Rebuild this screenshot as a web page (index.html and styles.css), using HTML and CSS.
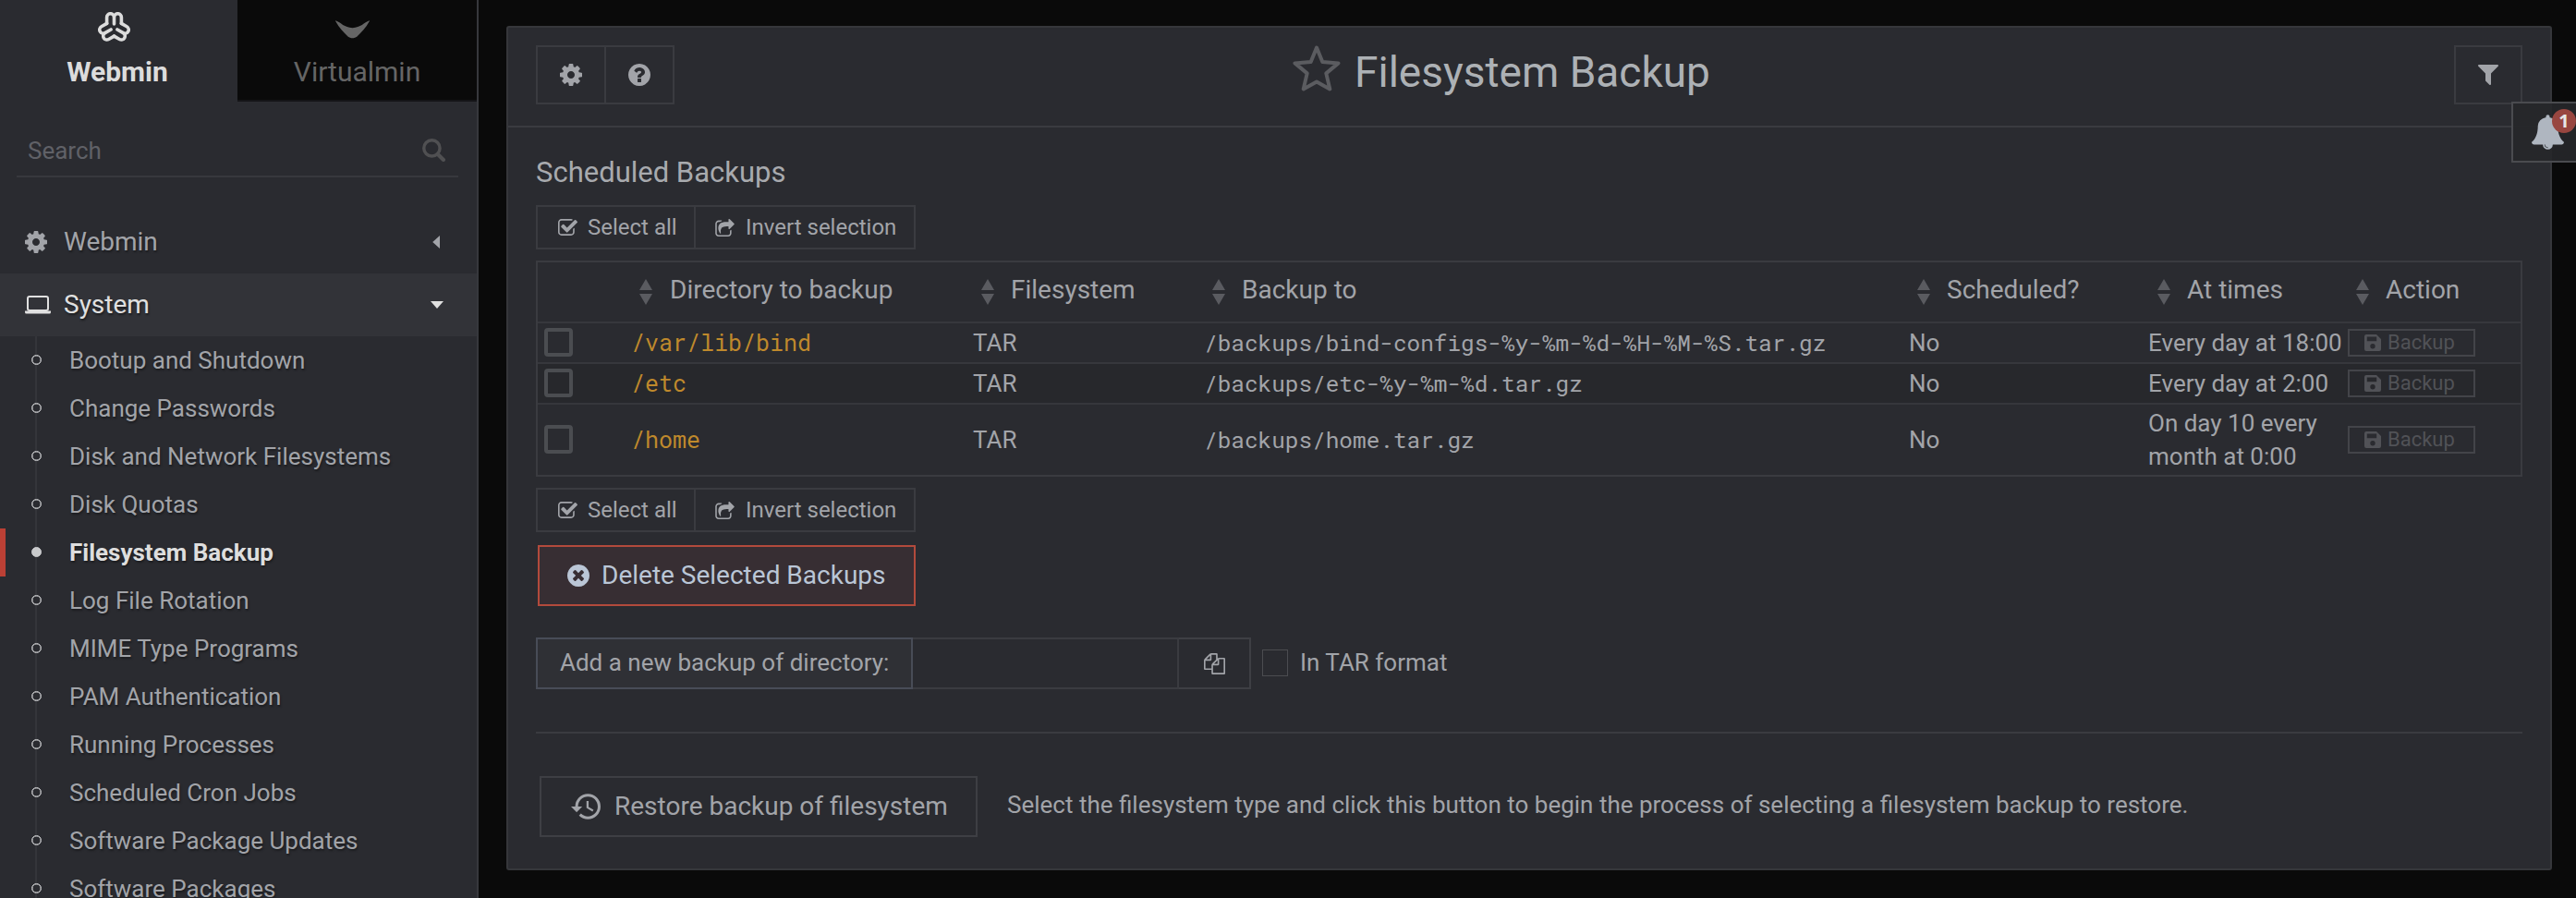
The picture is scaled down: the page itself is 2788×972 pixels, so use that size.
FILE: index.html
```
<!DOCTYPE html>
<html lang="en">
<head>
<meta charset="utf-8">
<title>Filesystem Backup</title>
<link rel="stylesheet" href="styles.css">
</head>
<body>
<svg class="defs" aria-hidden="true">
  <symbol id="cog" viewBox="128 128 1536 1536"><path d="M1152 896q0-106-75-181t-181-75-181 75-75 181 75 181 181 75 181-75 75-181zm512-109v222q0 12-8 23t-20 13l-185 28q-19 54-39 91 35 50 107 138 10 12 10 25t-9 23q-27 37-99 108t-94 71q-12 0-26-9l-138-108q-44 23-91 38-16 136-29 186-7 28-36 28h-222q-14 0-24.5-8.5t-11.5-21.5l-28-184q-49-16-90-37l-141 107q-10 9-25 9-14 0-25-11-126-114-165-168-7-10-7-23 0-12 8-23 15-21 51-66.5t54-70.5q-27-50-41-99l-183-27q-13-2-21-12.5t-8-23.5v-222q0-12 8-23t19-13l186-28q14-46 39-92-40-57-107-138-10-12-10-24 0-10 9-23 26-36 98.5-107.5t94.5-71.5q13 0 26 10l138 107q44-23 91-38 16-136 29-186 7-28 36-28h222q14 0 24.5 8.5t11.5 21.5l28 184q49 16 90 37l142-107q9-9 24-9 13 0 25 10 129 119 165 170 7 8 7 22 0 12-8 23-15 21-51 66.5t-54 70.5q26 50 41 98l183 28q13 2 21 12.5t8 23.5z"/></symbol>
  <symbol id="check" viewBox="64 128 1664 1408"><path d="M1472 930v318q0 119-84.5 203.5t-203.5 84.5h-832q-119 0-203.5-84.5t-84.5-203.5v-832q0-119 84.5-203.5t203.5-84.5h832q63 0 117 25 15 7 18 23 3 17-9 29l-49 49q-10 10-23 10-3 0-9-2-23-6-45-6h-832q-66 0-113 47t-47 113v832q0 66 47 113t113 47h832q66 0 113-47t47-113v-254q0-13 9-22l64-64q10-10 23-10 6 0 12 3 20 8 20 29zm231-489l-814 814q-24 24-57 24t-57-24l-430-430q-24-24-24-57t24-57l110-110q24-24 57-24t57 24l263 263 647-647q24-24 57-24t57 24l110 110q24 24 24 57t-24 57z"/></symbol>
  <symbol id="share" viewBox="64 0 1664 1536"><path d="M1472 989v259q0 119-84.5 203.5t-203.5 84.5h-832q-119 0-203.5-84.5t-84.5-203.5v-832q0-119 84.5-203.5t203.5-84.5h255q13 0 22.5 9.5t9.5 22.5q0 27-26 32-77 26-133 60-10 4-16 4h-112q-66 0-113 47t-47 113v832q0 66 47 113t113 47h832q66 0 113-47t47-113v-214q0-19 18-29 28-13 54-37 16-16 35-8 21 9 21 29zm237-496l-384 384q-18 19-45 19-12 0-25-5-39-17-39-59v-192h-160q-323 0-438 131-119 137-74 473 3 23-20 34-8 2-12 2-16 0-26-13-10-14-21-31t-39.5-68.5-49.5-99.5-38.5-114-17.5-122q0-49 3.5-91t14-90 28-88 47-81.5 68.5-74 94.5-61.5 124.5-48.5 159.5-30.5 196.5-11h160v-192q0-42 39-59 13-5 25-5 26 0 45 19l384 384q19 19 19 45t-19 45z"/></symbol>
  <symbol id="save" viewBox="0 0 18 18"><path fill-rule="evenodd" d="M2 0h11l5 5v11a2 2 0 0 1-2 2H2a2 2 0 0 1-2-2V2a2 2 0 0 1 2-2zm.8 2.6v4.6h10.4V2.6zM9 10a2.7 2.7 0 1 0 0 5.4 2.7 2.7 0 0 0 0-5.4z"/></symbol>
  <symbol id="sort" viewBox="0 0 14 28"><path d="M7 0l7 12H0zM0 16h14L7 28z"/></symbol>
</svg>

<div class="app">
  <aside class="sidebar">
    <div class="tabs">
      <div class="tab active">
        <svg class="tab-icon" viewBox="-17.5 -17 35 32"><g fill="none" stroke="currentColor" stroke-width="3.6" stroke-linecap="round" stroke-linejoin="round"><path id="lobe" d="M-7.9-4.5v-6.8a3.95 3.95 0 0 1 7.9 0v7.3v-7.3a3.95 3.95 0 0 1 7.9 0v6.8"/><use href="#lobe" transform="rotate(120)"/><use href="#lobe" transform="rotate(240)"/></g></svg>
        <span>Webmin</span>
      </div>
      <div class="tab">
        <svg class="tab-icon" viewBox="0 0 37 32"><path fill="currentColor" d="M.3 9.3C6 11.500 9.500 16.800 18.500 17.200 27.500 16.800 31 11.500 36.700 9.300c.3 0 .3.400.1.800C33 17 28 22.500 23.500 26.500c-3 2.400-7 2.400-10 0C9 22.500 4 17 .2 10.100 0 9.700 0 9.300.3 9.300z"/></svg>
        <span>Virtualmin</span>
      </div>
    </div>
    <div class="search">
      <span>Search</span>
      <svg viewBox="0 0 24 24"><circle cx="10" cy="10" r="8.300" fill="none" stroke="currentColor" stroke-width="3.300"/><path d="M16 16l6 6" stroke="currentColor" stroke-width="4" stroke-linecap="round"/></svg>
    </div>
    <div class="group">
      <span class="group-icon"><svg class="i24"><use href="#cog"/></svg></span>
      <span class="group-name">Webmin</span>
      <svg class="caret" viewBox="0 0 14 14"><path d="M10 0v14L2.200 7z"/></svg>
    </div>
    <div class="group open">
      <span class="group-icon"><svg class="laptop" viewBox="0 0 28 20"><rect x="3" y="1" width="22" height="15" rx="2" fill="none" stroke="currentColor" stroke-width="2"/><path d="M0 16.500h28V18q0 1.500-1.500 1.500h-25Q0 19.500 0 18z"/></svg></span>
      <span class="group-name">System</span>
      <svg class="caret" viewBox="0 0 14 14"><path d="M0 3h14L7 11z"/></svg>
    </div>
    <ul class="menu">
      <li>Bootup and Shutdown</li>
      <li>Change Passwords</li>
      <li>Disk and Network Filesystems</li>
      <li>Disk Quotas</li>
      <li class="current">Filesystem Backup</li>
      <li>Log File Rotation</li>
      <li>MIME Type Programs</li>
      <li>PAM Authentication</li>
      <li>Running Processes</li>
      <li>Scheduled Cron Jobs</li>
      <li>Software Package Updates</li>
      <li>Software Packages</li>
    </ul>
  </aside>

  <main class="panel">
    <header class="head">
      <div class="btns">
        <span class="sq"><svg class="i24"><use href="#cog"/></svg></span>
        <span class="sq"><svg class="i24" viewBox="128 128 1536 1536"><path d="M1024 1376v-192q0-14-9-23t-23-9h-192q-14 0-23 9t-9 23v192q0 14 9 23t23 9h192q14 0 23-9t9-23zm256-672q0-88-55.500-163t-138.500-116-170-41q-243 0-371 213-15 24 8 42l132 100q7 6 19 6 16 0 25-12 53-68 86-92 34-24 86-24 48 0 85.500 26t37.500 59q0 38-20 61t-68 45q-63 28-115.500 86.500t-52.500 125.500v36q0 14 9 23t23 9h192q14 0 23-9t9-23q0-19 21.500-49.500t54.500-49.500q32-18 49-28.500t46-35 44.500-48 28-60.500 12.500-81zm384 192q0 209-103 385.500t-279.500 279.500-385.500 103-385.500-103-279.500-279.500-103-385.500 103-385.500 279.500-279.500 385.500-103 385.500 103 279.500 279.500 103 385.500z"/></svg></span>
      </div>
      <h1><svg class="star" viewBox="0 0 52 50"><path d="M26 2.500l6.300 15.600 17.200 1.300-13.200 11 4 17L26 39.500 11.700 47.400l4-17-13.200-11 17.200-1.300z" fill="none" stroke="currentColor" stroke-width="4" stroke-linejoin="round"/></svg><span>Filesystem Backup</span></h1>
      <div class="btns">
        <span class="sq"><svg class="funnel" viewBox="193 256 1406 1408"><path d="M1595 295q17 41-14 70l-493 493v742q0 42-39 59-13 5-25 5-27 0-45-19l-256-256q-19-19-19-45v-486l-493-493q-31-29-14-70 17-39 59-39h1280q42 0 59 39z"/></svg></span>
      </div>
    </header>

    <section class="body">
      <h2>Scheduled Backups</h2>
      <div class="btns small">
        <span class="sb"><svg class="chk"><use href="#check"/></svg>Select all</span>
        <span class="sb"><svg class="shr"><use href="#share"/></svg>Invert selection</span>
      </div>
      <table>
        <colgroup><col class="c0"><col class="c1"><col class="c2"><col class="c3"><col class="c4"><col class="c5"><col class="c6"></colgroup>
        <thead>
          <tr>
            <th></th>
            <th><div><svg class="sort"><use href="#sort"/></svg>Directory to backup</div></th>
            <th><div><svg class="sort"><use href="#sort"/></svg>Filesystem</div></th>
            <th><div><svg class="sort"><use href="#sort"/></svg>Backup to</div></th>
            <th><div><svg class="sort"><use href="#sort"/></svg>Scheduled?</div></th>
            <th><div><svg class="sort"><use href="#sort"/></svg>At times</div></th>
            <th><div><svg class="sort"><use href="#sort"/></svg>Action</div></th>
          </tr>
        </thead>
        <tbody>
          <tr>
            <td><span class="box"></span></td><td class="mono link">/var/lib/bind</td><td>TAR</td><td class="mono">/backups/bind-configs-%y-%m-%d-%H-%M-%S.tar.gz</td><td>No</td><td>Every day at 18:00</td>
            <td><span class="act"><svg class="i18"><use href="#save"/></svg>Backup</span></td>
          </tr>
          <tr class="alt">
            <td><span class="box"></span></td><td class="mono link">/etc</td><td>TAR</td><td class="mono">/backups/etc-%y-%m-%d.tar.gz</td><td>No</td><td>Every day at 2:00</td>
            <td><span class="act"><svg class="i18"><use href="#save"/></svg>Backup</span></td>
          </tr>
          <tr class="tall">
            <td><span class="box"></span></td><td class="mono link">/home</td><td>TAR</td><td class="mono">/backups/home.tar.gz</td><td>No</td><td>On day 10 every month at 0:00</td>
            <td><span class="act"><svg class="i18"><use href="#save"/></svg>Backup</span></td>
          </tr>
        </tbody>
      </table>
      <div class="btns small">
        <span class="sb"><svg class="chk"><use href="#check"/></svg>Select all</span>
        <span class="sb"><svg class="shr"><use href="#share"/></svg>Invert selection</span>
      </div>
      <div class="delete"><svg class="i24" viewBox="128 128 1536 1536"><path d="M1277 1122q0-26-19-45l-181-181 181-181q19-19 19-45 0-27-19-46l-90-90q-19-19-46-19-26 0-45 19l-181 181-181-181q-19-19-45-19-27 0-46 19l-90 90q-19 19-19 46 0 26 19 45l181 181-181 181q-19 19-19 45 0 27 19 46l90 90q19 19 46 19 26 0 45-19l181-181 181 181q19 19 45 19 27 0 46-19l90-90q19-19 19-46zm387-226q0 209-103 385.500t-279.500 279.500-385.500 103-385.500-103-279.500-279.500-103-385.500 103-385.500 279.500-279.500 385.500-103 385.500 103 279.500 279.500 103 385.500z"/></svg>Delete Selected Backups</div>
      <div class="add">
        <span class="addon">Add a new backup of directory:</span>
        <span class="input"></span>
        <span class="copy"><svg viewBox="0 0 1792 1792"><path d="M1696 384q40 0 68 28t28 68v1216q0 40-28 68t-68 28h-960q-40 0-68-28t-28-68v-288h-544q-40 0-68-28t-28-68v-672q0-40 20-88t48-76l408-408q28-28 76-48t88-20h416q40 0 68 28t28 68v328q68-40 128-40h416zm-544 213l-299 299h299v-299zm-640-384l-299 299h299v-299zm196 647l316-316v-416h-384v416q0 40-28 68t-68 28h-416v640h512v-256q0-40 20-88t48-76zm956 804v-1152h-384v416q0 40-28 68t-68 28h-416v640h896z"/></svg></span>
        <span class="tick"></span>
        <span class="tick-label">In TAR format</span>
      </div>
      <hr>
      <div class="restore">
        <span class="rbtn"><svg viewBox="1 3 21 18"><path d="M13 3a9 9 0 0 0-9 9H1l3.890 3.890.07.14L9 12H6c0-3.870 3.130-7 7-7s7 3.130 7 7-3.130 7-7 7c-1.930 0-3.680-.79-4.940-2.060l-1.420 1.420A8.954 8.954 0 0 0 13 21a9 9 0 0 0 0-18zm-1 5v5l4.280 2.540.72-1.210-3.500-2.080V8z"/></svg>Restore backup of filesystem</span>
        <span class="help">Select the filesystem type and click this button to begin the process of selecting a filesystem backup to restore.</span>
      </div>
    </section>
  </main>

  <div class="notice">
    <svg viewBox="64 0 1664 1792"><path d="M912 1696q0-16-16-16-59 0-101.500-42.500t-42.500-101.500q0-16-16-16t-16 16q0 73 51.500 124.500t124.500 51.500q16 0 16-16zm816-288q0 52-38 90t-90 38h-448q0 106-75 181t-181 75-181-75-75-181h-448q-52 0-90-38t-38-90q50-42 91-88t85-119.500 74.500-158.500 50-206 19.500-260q0-152 117-282.500t307-158.500q-8-19-8-39 0-40 28-68t68-28 68 28 28 68q0 20-8 39 190 28 307 158.500t117 282.500q0 139 19.500 260t50 206 74.500 158.500 85 119.500 91 88z"/></svg>
    <span class="badge">1</span>
  </div>
</div>
</body>
</html>
```
FILE: styles.css
```
*, *::before { box-sizing: border-box; }
body {
  margin: 0;
  background: #0a0a0a;
  color: #a2a4a9;
  font: 26px/36px Roboto, "Noto Sans", sans-serif;
}
svg { display: block; flex: none; fill: currentColor; }
.defs { position: absolute; width: 0; height: 0; }
.app { position: relative; display: flex; width: 2788px; height: 972px; overflow: hidden; }

/* Sidebar */
.sidebar {
  flex: none;
  width: 518px;
  height: 972px;
  overflow: hidden;
  background: #2a2b30;
  border-right: 2px solid #37383d;
}
.tabs { display: flex; height: 110px; }
.tab {
  flex: 1;
  display: flex;
  flex-direction: column;
  align-items: center;
  padding-top: 13px;
  background: #0a0a0a;
  border-bottom: 2px solid #141417;
  color: #656565;
  font-size: 30px;
}
.tab.active { flex: 0 0 257px; background: none; border-color: transparent; color: #dcdcdc; font-weight: 700; }
.tab.active span { margin-right: 3px; }
.tab-icon { width: 35px; height: 32px; margin: 0 10px 15px 0; }
.tab:not(.active) .tab-icon { width: 37px; }
.search {
  display: flex;
  justify-content: space-between;
  align-items: center;
  margin: 34px 20px 36px 18px;
  height: 48px;
  padding: 0 14px 9px 12px;
  border-bottom: 2px solid #37383d;
  color: #606167;
}
.search svg { width: 25px; height: 25px; color: #505052; }
.group { display: flex; align-items: center; height: 68px; padding: 0 36px 0 27px; font-size: 28px; text-shadow: 1px 2px 2px #1c1d20; }
.group-icon { width: 42px; }
.group-name { flex: 1; }
.group.open { background: #323338; color: #e0e0e0; }
.laptop { width: 28px; height: 20px; }
.caret { width: 14px; height: 14px; }
.menu {
  margin: 0;
  padding: 0;
  list-style: none;
  text-shadow: 1px 2px 2px #1c1d20;
  background: linear-gradient(#34353a, #34353a) 38px 0 / 2px 100% no-repeat;
}
.menu li { display: flex; align-items: center; height: 52px; }
.menu li::before {
  content: "";
  width: 11px;
  height: 11px;
  margin: 0 30px 1px 34px;
  border: 1px solid #c9cacc;
  border-radius: 50%;
  background: #2a2b30;
  box-shadow: inset 0 0 0 .5px #c9cacc;
}
.menu .current { border-left: 6px solid #bb4035; color: #dedede; font-weight: 700; }
.menu .current::before { margin-left: 28px; background: #c9cacc; }

/* Main panel */
.panel {
  width: 2214px;
  height: 914px;
  margin: 28px 0 0 30px;
  background: #2a2b30;
  border: 2px solid #36373b;
  border-radius: 3px;
}
.head { display: flex; justify-content: space-between; height: 108px; padding: 19px 30px 0; border-bottom: 2px solid #3a3b40; }
.btns { display: flex; }
.sq {
  display: flex;
  align-items: center;
  justify-content: center;
  width: 76px;
  height: 64px;
  border: 2px solid #3a3b40;
}
.sq + .sq { margin-left: -2px; }
.btns:last-child .sq { width: 74px; }
.i24 { width: 24px; height: 24px; }
.i18 { width: 18px; height: 18px; }
.funnel { width: 22px; height: 22px; }
h1 { display: flex; margin: 0 0 0 -136px; color: #adb1b5; font-size: 46px; line-height: 58px; font-weight: 400; }
.star { width: 52px; height: 50px; margin-right: 15px; color: #5b5c60; }
.body { padding: 0 30px; }
h2 { margin: 31px 0 17px; color: #a8aaae; font-size: 31px; line-height: 36px; font-weight: 400; }
.sb {
  display: flex;
  align-items: center;
  width: 240px;
  height: 48px;
  padding-left: 21px;
  border: 2px solid #3a3b40;
  font-size: 24px;
  white-space: nowrap;
}
.sb:first-child { width: 173px; margin-right: -2px; padding-left: 22px; }
.chk { width: 21px; height: 18px; margin-right: 11px; }
.shr { width: 21px; height: 19px; margin-right: 12px; }

table {
  width: 2150px;
  margin: 12px 0;
  table-layout: fixed;
  border-collapse: separate;
  border-spacing: 0;
  border: 2px solid #3a3b40;
}
th, td { padding: 0; text-align: left; }
th { height: 64px; padding-bottom: 4px; font-size: 28px; font-weight: 400; }
th div { display: flex; align-items: center; padding-left: 9px; }
.sort { width: 14px; height: 28px; margin: 4px 18px 0 0; color: #5a5b60; }
th:nth-child(2) .sort { margin-right: 19px; }
td { height: 44px; border-top: 2px solid #36373c; }
.alt td { background: #27282c; }
.tall td { height: 78px; }
.c0 { width: 101px; }
.c1 { width: 370px; }
.c2 { width: 250px; }
.c3 { width: 763px; }
.c4 { width: 259px; }
.c5 { width: 216px; }
.c6 { width: 187px; }
th:nth-child(6) div { padding-left: 10px; }
.mono { font-family: "Roboto Mono", "DejaVu Sans Mono", monospace; font-size: 24.400px; }
.link { color: #bf892c; font-size: 25px; }
.box { display: block; width: 31px; height: 31px; margin: 0 0 1px 7px; border: 4px solid #4b4d51; border-radius: 4px; }
.act {
  display: flex;
  align-items: center;
  width: 138px;
  height: 30px;
  padding-left: 16px;
  gap: 7px;
  border: 2px solid #434449;
  color: #515257;
  font-size: 22px;
}

.delete {
  display: flex;
  align-items: center;
  width: 409px;
  height: 66px;
  margin: 14px 0 34px 2px;
  padding-left: 30px;
  gap: 13px;
  border: 2px solid #b24a3c;
  background: #372e33;
  color: #bac6d6;
  font-size: 28px;
}
.add { display: flex; align-items: center; height: 56px; }
.addon { display: flex; align-items: center; width: 408px; height: 56px; padding: 0 0 2px 24px; background: #2f3035; border: 2px solid #484c57; }
.input { width: 288px; height: 56px; border: 2px solid #3a3b40; border-left: 0; }
.copy { display: flex; align-items: center; justify-content: center; width: 78px; height: 56px; border: 2px solid #3e3f44; border-left: 0; }
.copy svg { width: 23px; height: 23px; }
.tick { width: 28px; height: 29px; margin: 0 13px 2px 12px; border: 1px solid #4b4c50; }
.tick-label { padding-bottom: 2px; }
hr { height: 2px; margin: 46px 0; border: 0; background: #3a3b40; }
.restore { display: flex; align-items: center; margin-left: 4px; }
.rbtn {
  display: flex;
  align-items: center;
  width: 474px;
  height: 66px;
  margin-right: 32px;
  padding-left: 32px;
  gap: 15px;
  border: 2px solid #3e3f44;
  font-size: 28px;
}
.rbtn svg { width: 32px; height: 28px; }
.help { padding-bottom: 4px; }

/* Notification tab pinned over the right edge */
.notice {
  position: absolute;
  left: 2718px;
  top: 110px;
  width: 72px;
  height: 66px;
  border: 2px solid #4a4b4f;
  background: rgba(38, 39, 42, .93);
  color: #afb6c0;
}
.notice svg { width: 35px; height: 38px; margin: 12px 0 0 20px; }
.badge {
  position: absolute;
  left: 42px;
  top: 6px;
  width: 26px;
  height: 26px;
  border-radius: 50%;
  background: #984640;
  color: #e6e6e6;
  font: 700 20px/26px "Open Sans", sans-serif;
  text-align: center;
}
```
